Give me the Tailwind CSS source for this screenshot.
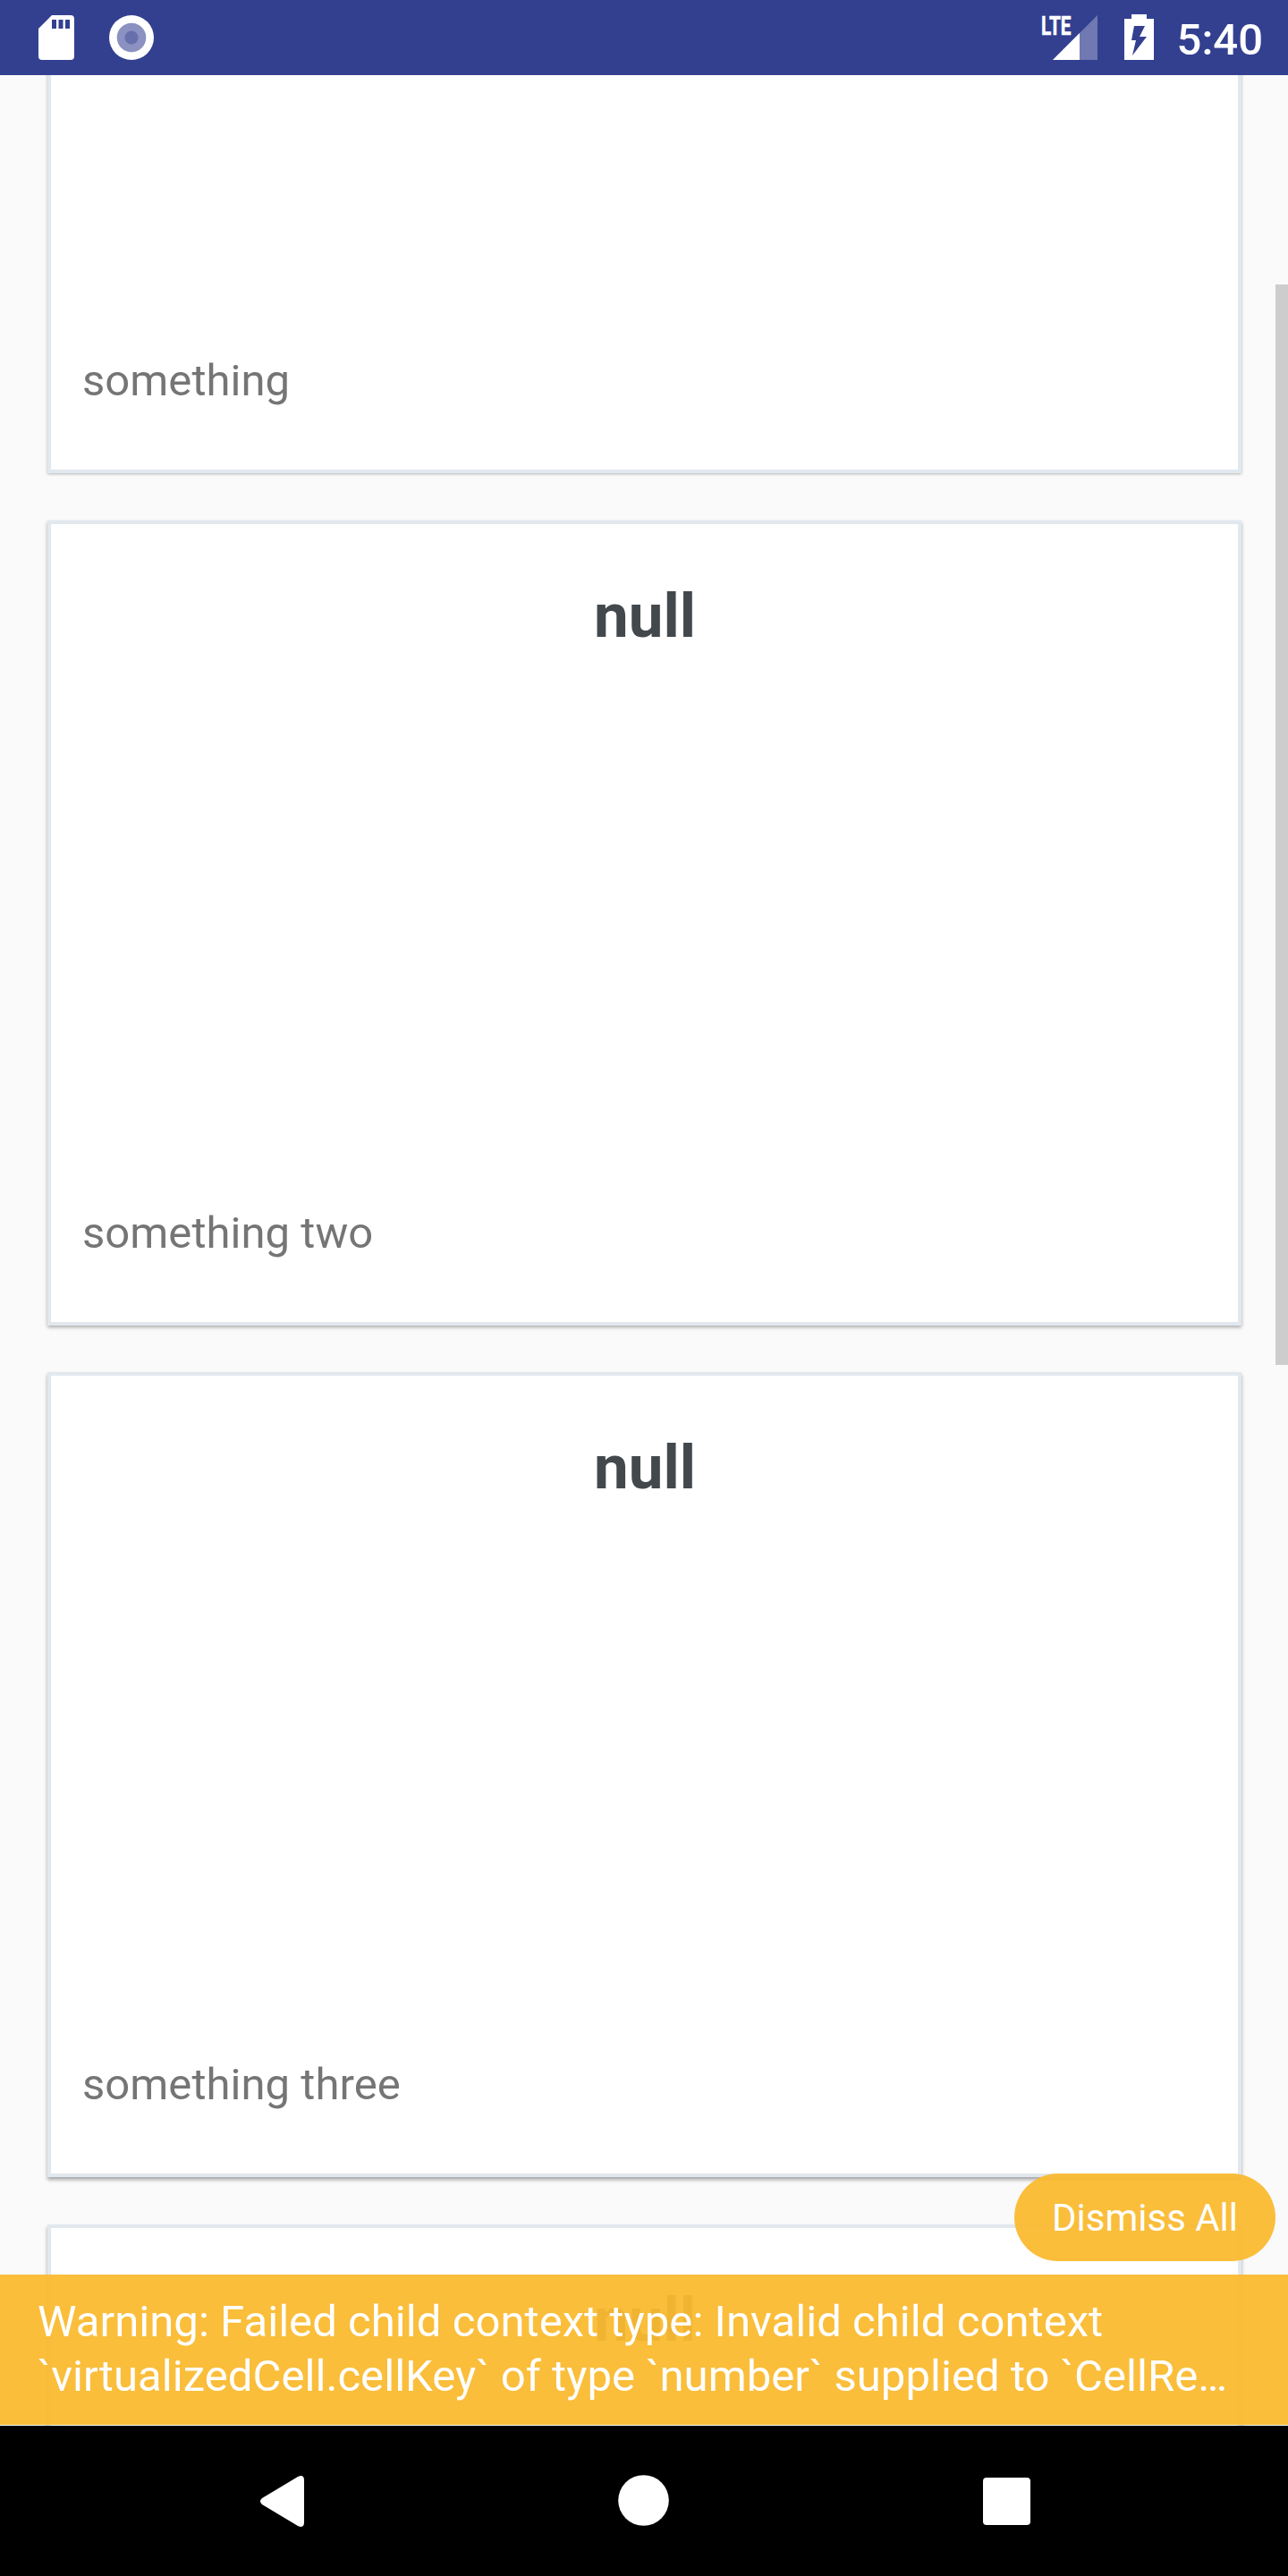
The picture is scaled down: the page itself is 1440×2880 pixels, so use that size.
<!DOCTYPE html>
<html lang="en">
<head>
<meta charset="utf-8">
<title>Cards</title>
<script src="https://cdn.jsdelivr.net/npm/@tailwindcss/browser@4"></script>
</head>
<body class="bg-[#fafafa]">
<div class="relative flex h-[2880px] w-[1440px] flex-col overflow-hidden font-['Roboto',sans-serif]">
  <header class="flex h-[84px] shrink-0 items-center justify-between bg-[#334090] text-white">
    <svg class="h-[84px] w-[200px]" viewBox="0 0 200 84" fill="#fff">
      <path fill-rule="evenodd" d="M58 17H79a4 4 0 0 1 4 4V63a4 4 0 0 1-4 4H47a4 4 0 0 1-4-4V32ZM58 22v10h5V22ZM65.5 22v10h5V22ZM73 22v10h5V22Z"/>
      <circle cx="147" cy="42" r="25"/>
      <circle cx="147" cy="42" r="16.3" fill="#8b92c1"/>
      <circle cx="147" cy="42" r="7.6" fill="#6770ad"/>
    </svg>
    <div class="flex items-center pr-[28px]">
      <svg class="h-[84px] w-[140px]" viewBox="1160 0 140 84" fill="#fff">
        <text x="1164" y="39" font-size="29.5" font-weight="700" textLength="33.5" lengthAdjust="spacingAndGlyphs" stroke="#fff" stroke-width=".5">LTE</text>
        <path d="M1227 17V67H1177Z" opacity=".3"/>
        <path d="M1207 37V67H1177Z"/>
        <path fill-rule="evenodd" d="M1265 16H1282V21H1290V67H1257V21H1265ZM1268 29L1265 45H1270L1266 62L1282 41H1274L1280 29Z"/>
      </svg>
      <span class="mt-[5px] ml-[16px] text-[49px] leading-[58px] font-medium">5:40</span>
    </div>
  </header>

  <main class="relative h-[2628px] shrink-0 overflow-hidden">
    <div class="mt-[-454.6px] flex flex-col gap-[52.4px] pr-[52px] pl-[53px]">
      <section class="flex h-[900px] flex-col justify-end border-4 border-[#e1e8ee] bg-white px-[35px] pt-[62px] pb-[70px] shadow-[0_1px_3px_rgba(0,0,0,0.28)]">
        <p class="text-[49px] leading-[58px] tracking-[0.05px] text-[#757575]">something</p>
      </section>
      <section class="flex h-[900px] flex-col justify-between border-4 border-[#e1e8ee] bg-white px-[35px] pt-[62px] pb-[70px] shadow-[0_2px_4px_rgba(0,0,0,0.32)]">
        <h2 class="pl-px text-center text-[69px] leading-[82px] font-bold text-[#43484d]">null</h2>
        <p class="text-[49px] leading-[58px] tracking-[0.05px] text-[#757575]">something two</p>
      </section>
      <section class="flex h-[900px] flex-col justify-between border-4 border-[#e1e8ee] bg-white px-[35px] pt-[62px] pb-[70px] shadow-[0_3px_4px_rgba(0,0,0,0.34)]">
        <h2 class="pl-px text-center text-[69px] leading-[82px] font-bold text-[#43484d]">null</h2>
        <p class="text-[49px] leading-[58px] tracking-[0.05px] text-[#757575]">something three</p>
      </section>
      <section class="flex h-[900px] flex-col justify-between border-4 border-[#e1e8ee] bg-white px-[35px] pt-[62px] pb-[70px] shadow-[0_3px_4px_rgba(0,0,0,0.34)]">
        <h2 class="pl-px text-center text-[69px] leading-[82px] font-bold text-[#43484d]">null</h2>
      </section>
    </div>
    <div class="absolute top-[234px] right-0 h-[1208px] w-[14px] bg-[#cdcdcd]"></div>
    <div class="absolute inset-x-0 bottom-px flex flex-col items-end gap-[15px] text-white">
      <button class="mr-[14px] h-[98px] w-[292px] rounded-full bg-[#faba30]/95 text-[42px] leading-[100px]">Dismiss All</button>
      <div class="h-[168px] w-full bg-[#faba30]/95 pt-[22px] pl-[42px] text-[49px] leading-[61px] tracking-[0.065px] whitespace-nowrap">
        <div>Warning: Failed child context type: Invalid child context</div>
        <div>`virtualizedCell.cellKey` of type `number` supplied to `CellRe…</div>
      </div>
    </div>
  </main>

  <nav class="h-[168px] shrink-0 bg-black">
    <svg class="h-[168px] w-[1440px]" viewBox="0 2712 1440 168" fill="#fff">
      <path d="M293 2793L333 2769Q340 2766 340 2773V2820Q340 2827 333 2824L293 2800Q289 2796.500 293 2793Z"/>
      <circle cx="719.5" cy="2795.500" r="28.300"/>
      <rect x="1099" y="2770" width="53" height="53" rx="4"/>
    </svg>
  </nav>
</div>
</body>
</html>
